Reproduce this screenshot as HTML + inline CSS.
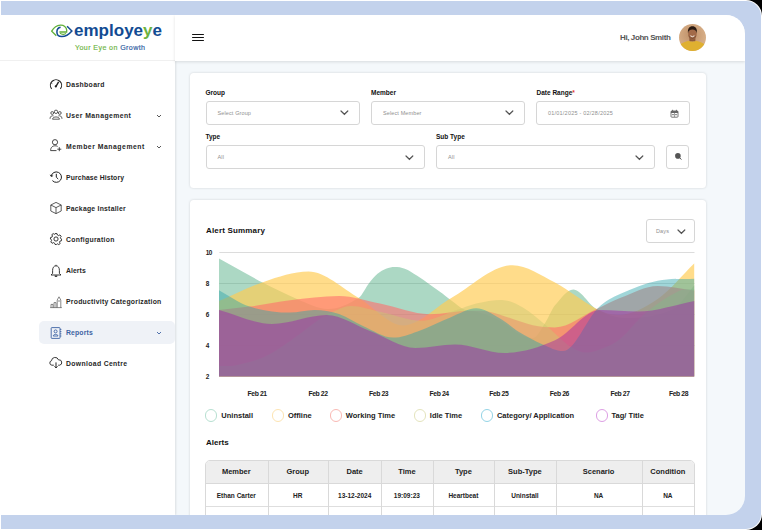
<!DOCTYPE html>
<html><head><meta charset="utf-8">
<style>
*{box-sizing:border-box;margin:0;padding:0}
html,body{width:762px;height:530px;overflow:hidden;background:#000}
body{position:relative;font-family:"Liberation Sans",sans-serif;color:#222}
.abs{position:absolute}
#fringe{left:0;top:0;width:762px;height:530px;background:#fff;border-radius:0 16px 16px 0}
#frame{left:1px;top:1px;width:760px;height:528px;background:#c3d2ec;border-radius:0 15px 15px 0}
#app{left:0;top:15px;width:745px;height:500px;background:#f4f8fb;border-radius:0 19px 19px 0;overflow:hidden}
#pg{left:0;top:-15px;width:762px;height:530px}
#side{left:0;top:15px;width:174.5px;height:500px;background:#fff;box-shadow:.5px 0 2px rgba(0,0,0,.1)}
#head{left:175px;top:15px;width:570px;height:45.8px;background:#fff;box-shadow:0 1px 3px rgba(0,0,0,.12)}
.nav{position:absolute;left:0;width:175px;height:23px;font-size:6.84px;font-weight:bold;color:#262626;white-space:nowrap}
.nav .t{position:absolute;left:66px;top:6.9px;line-height:10px;letter-spacing:.35px}
.nav svg{position:absolute;left:49px;top:4.5px}
.nav svg.chev{left:156px;top:10px}
.card{position:absolute;background:#fff;border-radius:3.5px;box-shadow:0 0 2.5px rgba(0,0,0,.16)}
.lbl{position:absolute;font-size:6.5px;font-weight:bold;color:#111;white-space:nowrap}
.sel{position:absolute;height:23.5px;border:1px solid #d6d6d6;border-radius:3px;background:#fff}
.sel .ph{position:absolute;left:11px;top:7.7px;font-size:5.5px;color:#8f8f8f;white-space:nowrap;letter-spacing:.12px}
.sel svg{position:absolute}
.lg{position:absolute;top:409.3px;width:12.3px;height:12.3px;border:1px solid;border-radius:50%}
.lgt{position:absolute;top:411px;font-size:7.5px;font-weight:bold;color:#222;line-height:9px;white-space:nowrap}
.vl{position:absolute;top:0;width:1px;height:80px;background:#d9d9d9}
.th{position:absolute;top:6.2px;text-align:center;font-size:7.5px;font-weight:bold;color:#222;line-height:9px;white-space:nowrap}
.td{position:absolute;top:31px;text-align:center;font-size:6.5px;font-weight:bold;color:#222;line-height:8px;white-space:nowrap}
.yl{position:absolute;left:205.8px;font-size:6.4px;letter-spacing:-.5px;font-weight:bold;color:#222;line-height:8px}
.xl{position:absolute;top:389px;width:40px;text-align:center;font-size:6.8px;letter-spacing:-.4px;font-weight:bold;color:#222;line-height:9px;white-space:nowrap}
</style></head>
<body>
<div id="fringe" class="abs"></div>
<div id="frame" class="abs"></div>
<div id="app" class="abs"><div id="pg" class="abs">
<div id="side" class="abs"></div>
<div class="abs" style="left:0;top:60px;width:175px;height:1px;background:#f0f0f0"></div>
<div id="head" class="abs"></div>
<!-- LOGO -->
<svg class="abs" style="left:48px;top:20px" width="30" height="22" viewBox="0 0 30 22">
 <path d="M8.3,15.8 L3.7,11.2 C5,9 7.6,5.5 12.4,5.2 C15.6,5 18.7,7 18.7,10.2 L18.6,12 L11.4,12" stroke="#62b03a" stroke-width="1.35" fill="none"/>
 <path d="M12,13.2 Q13.4,14.5 15.4,14.4 Q17.2,14.3 17.9,13.4" stroke="#62b03a" stroke-width="1.1" fill="none"/>
 <path d="M12.6,7.2 C10.4,7.5 8.9,9.6 8.9,12 C8.9,14.8 11,16.6 13.8,16.6 C17.6,16.6 21.5,13.8 23.9,11 L19.1,6.2" stroke="#124b93" stroke-width="1.5" fill="none"/>
</svg>
<div class="abs" style="left:74px;top:21.2px;font-size:15px;font-weight:bold;color:#124b93;line-height:18px;white-space:nowrap;transform:scale(1.135,1.06);transform-origin:0 0">employe<span style="color:#6cb33f">y</span>e</div>
<div class="abs" style="left:75px;top:44.2px;font-size:7.1px;color:#6db443;letter-spacing:0.4px;line-height:9px;white-space:nowrap;-webkit-text-stroke:.15px #6db443">Your Eye on <span style="color:#2c5aa0;-webkit-text-stroke:.15px #2c5aa0">Growth</span></div>

<!-- NAV -->
<div class="nav" style="top:73px">
 <svg style="top:3.5px" width="14" height="14" viewBox="0 0 14 14"><path d="M2.6,11.8 A5.6,5.6 0 1 1 11.4,11.8" stroke="#222" stroke-width="1.1" fill="none"/><path d="M7,9.3 L9.6,4.8" stroke="#222" stroke-width="1.4"/><circle cx="6.8" cy="9.4" r="1.1" fill="#222"/><path d="M2.3,6.2 l1,.5 M4.2,3.2 l.6,.9" stroke="#222" stroke-width=".9"/></svg>
 <span class="t">Dashboard</span>
</div>
<div class="nav" style="top:104px">
 <svg style="top:4.2px" width="14" height="14" viewBox="0 0 14 14" fill="none" stroke="#333" stroke-width=".8"><circle cx="7" cy="3.8" r="1.7"/><circle cx="3.2" cy="5" r="1.4"/><circle cx="10.8" cy="5" r="1.4"/><path d="M3.5,11.2 C3.8,8.2 10.2,8.2 10.5,11.2 Z"/><path d="M1,10.8 C1,8 3.2,7.4 4.6,7.9 M13,10.8 C13,8 10.8,7.4 9.4,7.9"/></svg>
 <span class="t" style="letter-spacing:0.43px">User Management</span>
 <svg class="chev" width="6" height="4" viewBox="0 0 6 4"><path d="M1,1 L3,3 L5,1" stroke="#444" stroke-width=".9" fill="none"/></svg>
</div>
<div class="nav" style="top:135px">
 <svg style="top:3.2px" width="14" height="14" viewBox="0 0 14 14" fill="none" stroke="#333" stroke-width=".9"><circle cx="6" cy="4.2" r="2.6"/><path d="M1.6,12.6 C1.6,9 4,7.8 6.2,7.8 C7.2,7.8 8,8 8.6,8.4 M1.6,12.6 L7.5,12.6"/><path d="M10.3,9.2 L10.3,13.2 M8.3,11.2 L12.3,11.2"/></svg>
 <span class="t" style="letter-spacing:0.53px">Member Management</span>
 <svg class="chev" width="6" height="4" viewBox="0 0 6 4"><path d="M1,1 L3,3 L5,1" stroke="#444" stroke-width=".9" fill="none"/></svg>
</div>
<div class="nav" style="top:166px">
 <svg style="top:3.8px" width="14" height="14" viewBox="0 0 14 14" fill="none" stroke="#222" stroke-width="1"><path d="M2.2,6 A5.2,5.2 0 1 1 3.4,10.6"/><path d="M7.3,3.8 L7.3,7.2 L9.2,9"/><path d="M1.2,4.8 L2.3,6.6 L4.1,5.6" stroke-width=".9"/></svg>
 <span class="t" style="letter-spacing:0.12px">Purchase History</span>
</div>
<div class="nav" style="top:197px">
 <svg style="top:3.8px" width="14" height="14" viewBox="0 0 14 14" fill="none" stroke="#333" stroke-width=".8"><path d="M7,1.4 L12.2,4 L12.2,10 L7,12.6 L1.8,10 L1.8,4 Z M1.8,4 L7,6.6 L12.2,4 M7,6.6 L7,12.6"/></svg>
 <span class="t" style="letter-spacing:0.24px">Package Installer</span>
</div>
<div class="nav" style="top:228px">
 <svg style="top:4px" width="14" height="14" viewBox="0 0 14 14" fill="none" stroke="#222" stroke-width=".9"><circle cx="7" cy="7" r="2.1"/><path d="M6,1.6 L8,1.6 L8.4,3 L9.6,3.6 L10.9,2.9 L12.2,4.3 L11.4,5.6 L11.9,6.8 L12.6,7.2 L12.4,8.8 L11.1,9 L10.5,10.2 L11.2,11.5 L9.8,12.6 L8.6,11.8 L7.6,12.4 L7.1,12.6 L6,12.4 L5.6,11.2 L4.4,10.6 L3.1,11.3 L1.8,9.9 L2.6,8.6 L2.2,7.4 L1.4,7 L1.6,5.4 L2.9,5.2 L3.5,4 L2.8,2.7 L4.2,1.6 L5.5,2.4 Z" stroke-linejoin="round"/></svg>
 <span class="t" style="letter-spacing:0.30px">Configuration</span>
</div>
<div class="nav" style="top:259px">
 <svg width="14" height="14" viewBox="0 0 14 14" fill="none" stroke="#222" stroke-width=".9"><path d="M7,1.8 C4.6,1.8 3.6,4 3.6,6.4 L3.6,9.4 L2,11 L12,11 L10.4,9.4 L10.4,6.4 C10.4,4 9.4,1.8 7,1.8 Z" stroke-linejoin="round"/><path d="M5.8,11.6 Q7,13.2 8.2,11.6" stroke-width="1.1"/><path d="M7,0.8 L7,1.8"/></svg>
 <span class="t" style="letter-spacing:0.07px">Alerts</span>
</div>
<div class="nav" style="top:290px">
 <svg width="14" height="14" viewBox="0 0 14 14" fill="none" stroke="#555" stroke-width=".7"><path d="M1.2,12.6 L12.8,12.6 M2,12.6 L2,9.4 L4,9.4 L4,12.6 M5,12.6 L5,7.6 L7,7.6 L7,12.6 M8.2,12.6 L8.2,5 L10,1.8 L11.8,5 L11.8,12.6 M9,6 L11,6"/></svg>
 <span class="t" style="letter-spacing:0.25px">Productivity Categorization</span>
</div>
<div class="abs" style="left:39px;top:321px;width:135.5px;height:23px;background:#eff2f7;border-radius:5px"></div>
<div class="nav" style="top:321px;color:#3d62a3">
 <svg width="14" height="14" viewBox="0 0 14 14" fill="none" stroke="#3d62a3" stroke-width=".9"><rect x="2.2" y="1.6" width="8.8" height="10.8" rx=".6"/><circle cx="6.6" cy="5.4" r="1.5"/><path d="M4.2,10 C4.4,7.8 8.8,7.8 9,10 Z"/><path d="M11,3.4 L12.4,3.4 M11,5.6 L12.4,5.6 M11,7.8 L12.4,7.8 M11,10 L12.4,10"/></svg>
 <span class="t" style="letter-spacing:0.15px">Reports</span>
 <svg class="chev" width="6" height="4" viewBox="0 0 6 4"><path d="M1,1 L3,3 L5,1" stroke="#3d62a3" stroke-width=".9" fill="none"/></svg>
</div>
<div class="nav" style="top:352px">
 <svg width="14" height="14" viewBox="0 0 14 14" fill="none" stroke="#222" stroke-width=".9" style="top:4px"><path d="M4.8,9.2 L2.9,9.2 A2.3,2.3 0 0 1 2.5,4.7 A3.6,3.6 0 0 1 9.5,3.9 A2.5,2.5 0 0 1 10.6,9.2 L9.2,9.2" stroke-linejoin="round"/><path d="M7,6.4 L7,11.8 M5.5,10.4 L7,11.9 L8.5,10.4" stroke-width="1"/></svg>
 <span class="t">Download Centre</span>
</div>
<!-- HEADER -->
<div class="abs" style="left:192px;top:33.5px;width:12px;height:1.6px;background:#111;border-radius:1px"></div>
<div class="abs" style="left:192px;top:36.7px;width:12px;height:1.6px;background:#111;border-radius:1px"></div>
<div class="abs" style="left:192px;top:39.9px;width:12px;height:1.6px;background:#111;border-radius:1px"></div>
<div class="abs" style="left:620px;top:33px;font-size:8px;font-weight:bold;color:#555;line-height:9px;white-space:nowrap;letter-spacing:-.4px">Hi, John Smith</div>
<svg class="abs" style="left:679px;top:24px" width="27" height="27" viewBox="0 0 27 27">
 <defs><clipPath id="av"><circle cx="13.5" cy="13.5" r="13.5"/></clipPath>
 <radialGradient id="avbg" cx=".45" cy=".4" r=".65"><stop offset="0" stop-color="#bf9068"/><stop offset="1" stop-color="#dcb58e"/></radialGradient></defs>
 <g clip-path="url(#av)">
  <rect width="27" height="27" fill="url(#avbg)"/>
  <rect x="10.4" y="12.5" width="6" height="5" fill="#8e5a3a"/>
  <path d="M0,27 L0,21.5 C2.5,19 6.5,17.4 9.8,16.8 C11.4,18 15.4,18 17,16.8 C20.5,17.4 24.5,19 27,21.5 L27,27 Z" fill="#dfb030"/>
  <ellipse cx="13.4" cy="9.8" rx="4.3" ry="5.8" fill="#a26a48"/>
  <path d="M9,9.4 C8.4,4.4 10.4,2.2 13.4,2.2 C16.4,2.2 18.6,4.4 17.8,9.4 C17.4,6.4 16,5.4 13.4,5.4 C10.8,5.4 9.4,6.4 9,9.4 Z" fill="#2a1a12"/>
  <path d="M11.4,11.8 Q13.4,13.6 15.4,11.8" stroke="#f4eee8" stroke-width="1" fill="none"/>
  <path d="M9.6,12 Q13.4,17 17.2,12" stroke="#3a2418" stroke-width=".7" fill="none" opacity=".5"/>
 </g>
</svg>
<!-- FILTER CARD -->
<div class="card" style="left:190px;top:72.5px;width:516px;height:115.5px"></div>
<div class="lbl" style="left:205.5px;top:89.2px">Group</div>
<div class="lbl" style="left:371px;top:89.2px">Member</div>
<div class="lbl" style="left:536.5px;top:89.2px">Date Range<span style="color:#e53935">*</span></div>
<div class="lbl" style="left:205.5px;top:133.2px">Type</div>
<div class="lbl" style="left:436px;top:133.2px">Sub Type</div>

<div class="sel" style="left:205.5px;top:101px;width:154px"><span class="ph">Select Group</span>
 <svg style="left:133.3px;top:8.3px" width="9" height="6" viewBox="0 0 9 6"><path d="M1,1 L4.4,4.3 L7.8,1" stroke="#555" stroke-width="1.2" fill="none" stroke-linecap="round"/></svg></div>
<div class="sel" style="left:371px;top:101px;width:153.5px"><span class="ph">Select Member</span>
 <svg style="left:132.8px;top:8.3px" width="9" height="6" viewBox="0 0 9 6"><path d="M1,1 L4.4,4.3 L7.8,1" stroke="#555" stroke-width="1.2" fill="none" stroke-linecap="round"/></svg></div>
<div class="sel" style="left:536px;top:101px;width:153.5px"><span class="ph" style="letter-spacing:.22px">01/01/2025 - 02/28/2025</span>
 <svg style="left:133.3px;top:6.6px" width="9" height="9" viewBox="0 0 9 9"><rect x="1" y="2" width="7" height="6.2" rx=".8" fill="none" stroke="#666" stroke-width=".9"/><rect x="1" y="2" width="7" height="2" fill="#666"/><path d="M2.6,.8 L2.6,2.8 M6.4,.8 L6.4,2.8" stroke="#666" stroke-width="1"/><rect x="2.2" y="5" width="1.6" height="1.2" fill="#777"/><rect x="5.2" y="5" width="1.6" height="1.2" fill="#777"/><path d="M4.5,4 L4.5,8" stroke="#666" stroke-width=".6"/></svg></div>
<div class="sel" style="left:205.5px;top:145.4px;width:219px"><span class="ph">All</span>
 <svg style="left:198px;top:8.3px" width="9" height="6" viewBox="0 0 9 6"><path d="M1,1 L4.4,4.3 L7.8,1" stroke="#555" stroke-width="1.2" fill="none" stroke-linecap="round"/></svg></div>
<div class="sel" style="left:436px;top:145.4px;width:218.5px"><span class="ph">All</span>
 <svg style="left:198px;top:8.3px" width="9" height="6" viewBox="0 0 9 6"><path d="M1,1 L4.4,4.3 L7.8,1" stroke="#555" stroke-width="1.2" fill="none" stroke-linecap="round"/></svg></div>
<div class="sel" style="left:666.3px;top:145.4px;width:23.2px">
 <svg style="left:6.5px;top:6px" width="9" height="9" viewBox="0 0 9 9"><circle cx="3.9" cy="3.9" r="2.8" fill="#555"/><path d="M5.6,5.6 L7.4,7.6" stroke="#555" stroke-width="1"/></svg></div>

<!-- CHART CARD -->
<div class="card" style="left:190px;top:200px;width:516px;height:340px"></div>
<div class="abs" style="left:206px;top:226px;font-size:8px;font-weight:bold;color:#111;line-height:9px;white-space:nowrap;letter-spacing:.17px">Alert Summary</div>
<div class="sel" style="left:646px;top:219.4px;width:48.5px"><span class="ph" style="left:9px;top:8px">Days</span>
 <svg style="left:29.8px;top:8.3px" width="9" height="6" viewBox="0 0 9 6"><path d="M1,1 L4.4,4.3 L7.8,1" stroke="#555" stroke-width="1.2" fill="none" stroke-linecap="round"/></svg></div>
<!-- CHART -->
<div class="yl" style="top:248.5px">10</div>
<div class="yl" style="top:279.6px">8</div>
<div class="yl" style="top:310.5px">6</div>
<div class="yl" style="top:341.8px">4</div>
<div class="yl" style="top:372.7px">2</div>
<div class="xl" style="left:237.2px">Feb 21</div>
<div class="xl" style="left:298.0px">Feb 22</div>
<div class="xl" style="left:358.6px">Feb 23</div>
<div class="xl" style="left:419.2px">Feb 24</div>
<div class="xl" style="left:478.8px">Feb 25</div>
<div class="xl" style="left:539.4px">Feb 26</div>
<div class="xl" style="left:600.0px">Feb 27</div>
<div class="xl" style="left:658.5px">Feb 28</div>
<svg class="abs" style="left:0;top:0" width="762" height="530" viewBox="0 0 762 530">
<clipPath id="pc"><rect x="219" y="240" width="475.5" height="136.6"/></clipPath>
<rect x="219.3" y="252.0" width="475.2" height="1" fill="#dcdcdc"/>
<rect x="219.3" y="283.0" width="475.2" height="1" fill="#dcdcdc"/>
<rect x="219.3" y="314.0" width="475.2" height="1" fill="#dcdcdc"/>
<rect x="219.3" y="345.0" width="475.2" height="1" fill="#dcdcdc"/>
<g clip-path="url(#pc)">
<path d="M219.0,258.6 C226.5,262.7 234.0,266.8 241.5,270.9 C248.9,274.9 256.2,279.4 263.6,283.1 C274.7,288.7 285.9,294.5 297.0,299.0 C307.3,303.2 317.7,309.0 328.0,309.0 C338.3,309.0 348.5,304.2 358.8,297.7 C362.2,295.6 365.6,287.5 369.0,283.2 C371.8,279.6 374.7,276.2 377.5,273.8 C380.3,271.4 383.2,269.8 386.0,268.7 C388.9,267.6 391.7,267.0 394.6,267.0 C398.0,267.0 401.4,267.4 404.8,268.7 C408.8,270.2 412.8,273.0 416.8,275.5 C421.3,278.4 425.9,281.7 430.4,284.9 C434.4,287.7 438.4,290.4 442.4,293.4 C445.3,295.5 448.1,298.1 451.0,300.2 C455.6,303.5 460.1,307.7 464.7,309.7 C469.1,311.6 473.6,310.6 478.0,312.0 C485.3,314.2 492.7,316.6 500.0,320.5 C506.2,323.8 512.4,330.2 518.6,333.5 C523.4,336.0 528.2,338.0 533.0,338.0 C537.2,338.0 541.5,328.3 545.7,322.0 C548.8,317.4 551.9,309.0 555.0,305.3 C561.1,298.1 567.1,289.4 573.2,289.4 C581.0,289.4 588.8,304.7 596.6,309.0 C606.1,314.2 615.5,318.0 625.0,318.0 C640.9,318.0 656.9,316.8 672.8,309.3 C680.0,305.9 687.2,293.2 694.4,285.2 L694.4,377.0 L219.0,377.0 Z" fill="#46a87c" fill-opacity="0.450"/>
<path d="M219.0,301.0 C233.9,294.6 248.7,286.8 263.6,281.9 C278.5,277.0 293.5,271.6 308.4,271.6 C325.2,271.6 341.9,288.4 358.7,297.9 C373.7,306.4 388.6,325.4 403.6,325.4 C419.4,325.4 435.1,307.0 450.9,298.3 C471.4,286.9 492.0,265.2 512.5,265.2 C526.7,265.2 540.8,275.2 555.0,282.6 C568.9,289.8 582.7,301.9 596.6,309.0 C603.7,312.7 610.9,315.0 618.0,315.0 C631.2,315.0 644.5,308.0 657.7,299.0 C669.9,290.7 682.2,275.2 694.4,263.3 L694.4,377.0 L219.0,377.0 Z" fill="#ffcb53" fill-opacity="0.680"/>
<path d="M219.0,310.0 C229.2,308.9 239.4,308.0 249.6,306.6 C263.1,304.8 276.5,301.9 290.0,300.3 C306.3,298.4 322.7,296.0 339.0,296.0 C352.7,296.0 366.3,300.9 380.0,303.6 C396.5,306.9 413.1,314.2 429.6,314.2 C443.1,314.2 456.5,310.7 470.0,310.7 C476.8,310.7 483.6,310.3 490.4,311.9 C504.5,315.2 518.7,321.9 532.8,325.3 C540.2,327.1 547.6,327.4 555.0,327.4 C568.9,327.4 582.7,315.3 596.6,309.0 C604.4,305.5 612.2,300.9 620.0,298.0 C632.6,293.3 645.1,286.0 657.7,286.0 C669.9,286.0 682.2,289.0 694.4,290.5 L694.4,377.0 L219.0,377.0 Z" fill="#ff6e6c" fill-opacity="0.600"/>
<path d="M219.0,366.0 C224.3,365.8 229.7,366.6 235.0,365.5 C244.7,363.6 254.3,361.2 264.0,357.0 C272.0,353.5 280.0,347.9 288.0,342.5 C295.8,337.2 303.7,330.7 311.5,325.0 C315.7,322.0 319.8,318.5 324.0,316.5 C333.0,312.2 342.0,306.0 351.0,306.0 C360.7,306.0 370.3,309.8 380.0,311.8 C393.8,314.7 407.5,320.7 421.3,320.7 C433.1,320.7 445.0,313.7 456.8,310.0 C463.3,308.0 469.7,304.9 476.2,303.4 C484.7,301.5 493.2,299.9 501.7,299.9 C508.8,299.9 515.8,303.5 522.9,307.6 C531.0,312.3 539.1,319.9 547.2,326.5 C555.1,333.0 563.0,341.8 570.9,347.0 C576.1,350.5 581.4,352.5 586.6,352.5 C591.9,352.5 597.1,350.6 602.4,348.5 C608.3,346.1 614.1,343.8 620.0,339.0 C628.3,332.1 636.7,320.2 645.0,313.4 C656.3,304.2 667.6,296.6 678.9,291.0 C684.1,288.4 689.2,289.7 694.4,289.0 L694.4,377.0 L219.0,377.0 Z" fill="#c9c870" fill-opacity="0.450"/>
<path d="M219.0,290.2 C229.2,295.7 239.4,303.4 249.6,306.6 C263.1,310.8 276.5,312.6 290.0,312.6 C298.2,312.6 306.3,310.0 314.5,310.0 C322.7,310.0 330.8,311.3 339.0,314.0 C347.0,316.6 355.0,322.5 363.0,326.0 C373.0,330.4 383.0,337.6 393.0,337.6 C401.2,337.6 409.4,334.3 417.6,331.4 C428.7,327.5 439.8,321.6 450.9,317.2 C459.3,313.9 467.8,308.3 476.2,308.3 C484.1,308.3 492.1,314.2 500.0,318.6 C506.2,322.0 512.4,328.0 518.6,331.7 C526.6,336.6 534.7,340.9 542.7,344.4 C549.5,347.3 556.2,351.0 563.0,351.0 C574.7,351.0 586.3,319.7 598.0,308.0 C605.3,300.7 612.7,297.4 620.0,294.0 C632.6,288.3 645.1,283.3 657.7,280.7 C669.9,278.2 682.2,279.4 694.4,278.8 L694.4,377.0 L219.0,377.0 Z" fill="#2ca3aa" fill-opacity="0.450"/>
<path d="M219.0,310.0 C236.7,314.7 254.3,324.0 272.0,324.0 C290.3,324.0 308.5,315.0 326.8,315.0 C341.2,315.0 355.6,325.7 370.0,331.0 C385.1,336.6 400.3,347.9 415.4,347.9 C428.6,347.9 441.8,344.4 455.0,344.4 C471.5,344.4 488.0,352.9 504.5,352.9 C521.3,352.9 538.2,347.8 555.0,340.2 C570.0,333.5 585.0,310.0 600.0,310.0 C612.7,310.0 625.3,311.6 638.0,311.6 C656.8,311.6 675.6,304.5 694.4,301.0 L694.4,377.0 L219.0,377.0 Z" fill="#a020a8" fill-opacity="0.450"/>
</g></svg>
<!-- LEGEND -->
<div class="abs" style="left:0;top:0">
 <div class="lg" style="left:205.1px;border-color:#b7e0d1"></div><div class="lgt" style="left:221.3px">Uninstall</div>
 <div class="lg" style="left:271.7px;border-color:#fde4b2"></div><div class="lgt" style="left:287.9px">Offline</div>
 <div class="lg" style="left:329.9px;border-color:#f9b9b4"></div><div class="lgt" style="left:345.8px">Working Time</div>
 <div class="lg" style="left:413.9px;border-color:#e4e4bd"></div><div class="lgt" style="left:429.8px">Idle Time</div>
 <div class="lg" style="left:481.2px;border-color:#94d4e6"></div><div class="lgt" style="left:496.9px">Category/ Application</div>
 <div class="lg" style="left:596px;border-color:#dd9fe4"></div><div class="lgt" style="left:611.6px">Tag/ Title</div>
</div>
<div class="abs" style="left:206px;top:438px;font-size:8px;font-weight:bold;color:#111;line-height:9px;white-space:nowrap">Alerts</div>
<!-- TABLE -->
<div class="abs" style="left:205.2px;top:460.2px;width:489.6px;height:80px;border:1px solid #d9d9d9;border-radius:5px 5px 0 0;overflow:hidden;background:#fff">
 <div class="abs" style="left:0;top:0;width:489px;height:23.3px;background:#eeeeee;border-bottom:1px solid #d9d9d9"></div>
 <div class="abs" style="left:0;top:44.9px;width:490px;height:1px;background:#dedede"></div>
 <div class="vl" style="left:61.4px"></div><div class="vl" style="left:122.1px"></div><div class="vl" style="left:175.3px"></div><div class="vl" style="left:226.5px"></div>
 <div class="vl" style="left:288.3px"></div><div class="vl" style="left:349.6px"></div><div class="vl" style="left:435.6px"></div>
 <div class="th" style="left:-1.0px;width:62.2px">Member</div>
 <div class="td" style="left:-1.0px;width:62.2px">Ethan Carter</div>
 <div class="th" style="left:61.2px;width:60.7px">Group</div>
 <div class="td" style="left:61.2px;width:60.7px">HR</div>
 <div class="th" style="left:121.9px;width:53.2px">Date</div>
 <div class="td" style="left:121.9px;width:53.2px">13-12-2024</div>
 <div class="th" style="left:175.1px;width:51.2px">Time</div>
 <div class="td" style="left:175.1px;width:51.2px">19:09:23</div>
 <div class="th" style="left:226.3px;width:61.8px">Type</div>
 <div class="td" style="left:226.3px;width:61.8px">Heartbeat</div>
 <div class="th" style="left:288.1px;width:61.3px">Sub-Type</div>
 <div class="td" style="left:288.1px;width:61.3px">Uninstall</div>
 <div class="th" style="left:349.4px;width:86.0px">Scenario</div>
 <div class="td" style="left:349.4px;width:86.0px">NA</div>
 <div class="th" style="left:435.4px;width:52.5px">Condition</div>
 <div class="td" style="left:435.4px;width:52.5px">NA</div>
</div>
</div></div>
</body></html>
